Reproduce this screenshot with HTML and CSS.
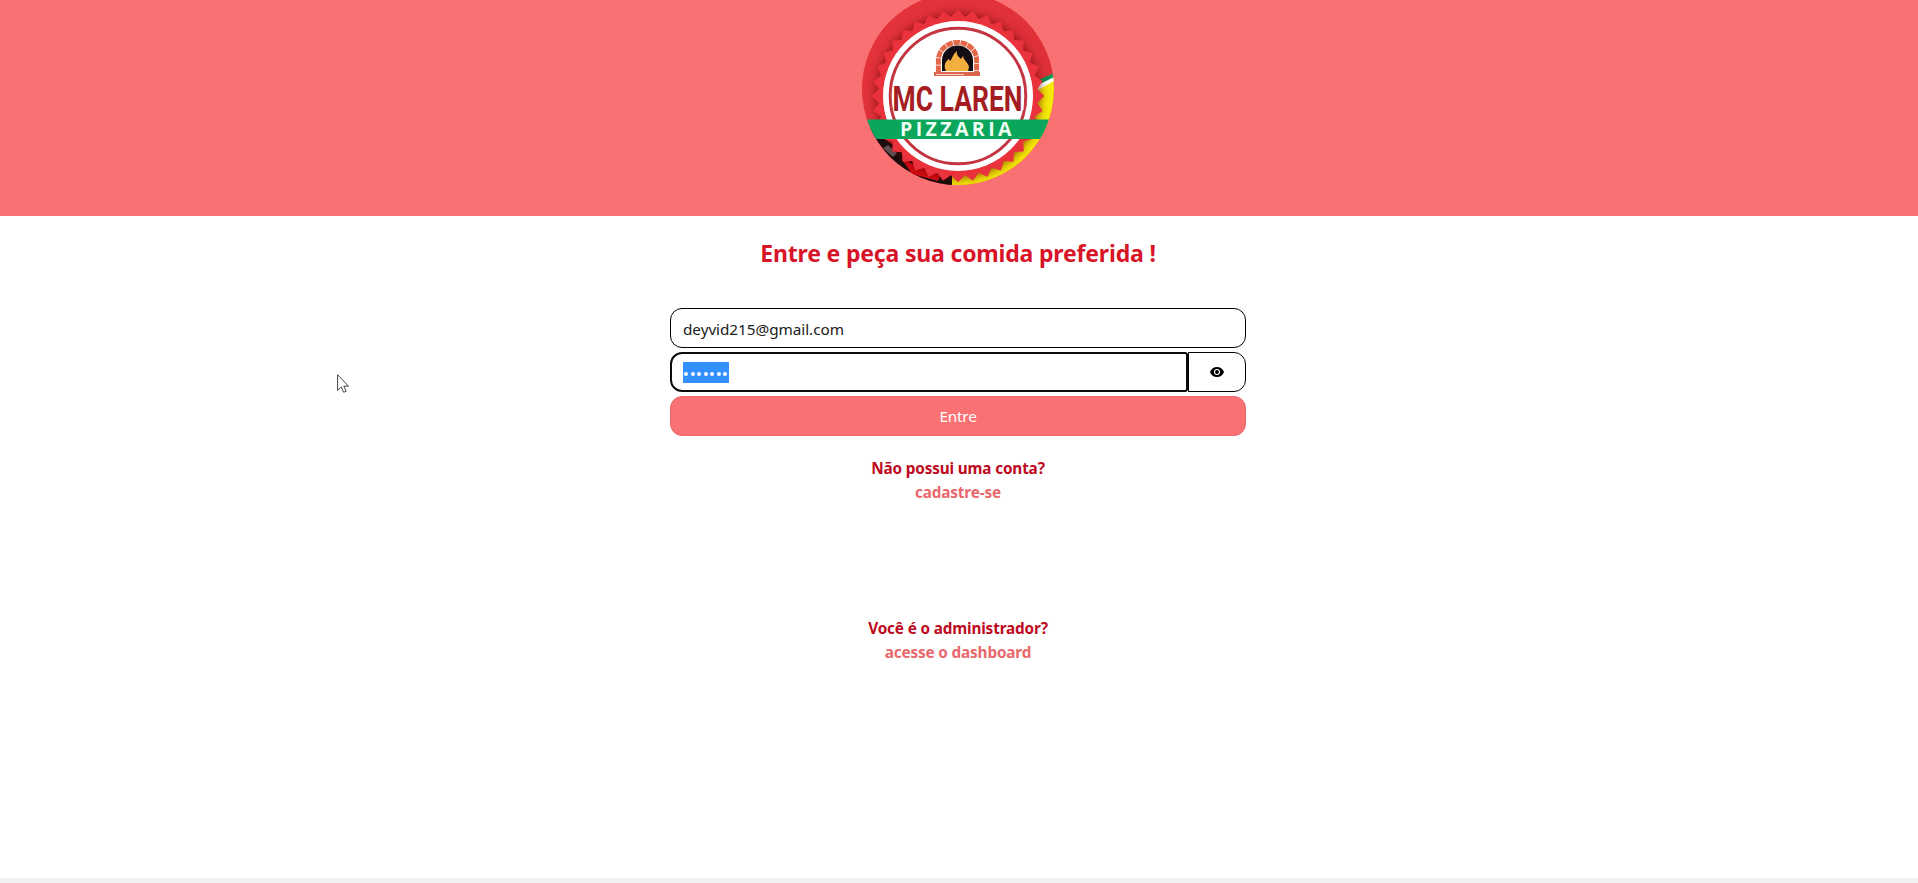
FILE: index.html
```html
<!DOCTYPE html>
<html lang="pt-BR">
<head>
<meta charset="utf-8">
<title>Mc Laren Pizzaria</title>
<link rel="stylesheet" href="styles.css">
</head>
<body>
<header class="hero">
  <svg class="logo" viewBox="862 -7 192 192" role="img" aria-label="Mc Laren Pizzaria">
    <defs>
      <clipPath id="disc"><circle cx="958" cy="89" r="96"/></clipPath>
      <linearGradient id="red" x1="0" y1="0" x2="0.8" y2="1"><stop offset="0" stop-color="#e5333b"/><stop offset="1" stop-color="#dc2f37"/></linearGradient>
      <filter id="soft" x="-20%" y="-20%" width="140%" height="140%"><feGaussianBlur stdDeviation="5"/></filter>
      <path id="sq" d="M958 11L1043 96L958 181L873 96Z"/>
      <g id="quarter"><use href="#sq"/><use href="#sq" transform="rotate(10 958 96)"/><use href="#sq" transform="rotate(20 958 96)"/><use href="#sq" transform="rotate(30 958 96)"/><use href="#sq" transform="rotate(40 958 96)"/></g>
      <g id="seal"><use href="#quarter"/><use href="#quarter" transform="rotate(50 958 96)"/></g>
    </defs>
    <g clip-path="url(#disc)">
      <rect x="862" y="-7" width="192" height="192" fill="url(#red)"/>
      <path d="M1036 83L1054 73V185H952V160Z" fill="#f5eb0a"/>
      <path d="M1038 84L1054 76V81L1038 90Z" fill="#fff"/>
      <path d="M1036 81L1054 73V77L1038 85Z" fill="#079455"/>
      <path d="M870 128L900 150L952 174V187H870Z" fill="#170d0e"/>
      <path d="M901 158L918 166L941 174L938 181L912 174Z" fill="#d80c14"/>
      <path d="M883 148L888 145L897 153L893 157Z" fill="#64565a"/>
      <use href="#seal" fill="#620911" opacity=".75" filter="url(#soft)"/>
      <use href="#seal" fill="#e9323b" stroke="#e9323b" stroke-width="1.5" stroke-linejoin="round"/>
      <circle cx="958" cy="96" r="75" fill="#fff"/>
      <circle cx="958" cy="96" r="67.8" fill="none" stroke="#c43441" stroke-width="3"/>
      <path d="M893 88H896V110H893ZM1020 88H1023.500V110H1020Z" fill="#fff"/>
      <path d="M938.4 72V60A19 17.5 0 0 1 976.6 60V72" fill="none" stroke="#e4694b" stroke-width="5" stroke-dasharray="6.6 .7"/>
      <path d="M942 71V60A15.5 14.5 0 0 1 973 60V71Z" fill="#130d13"/>
      <path d="M946 71C943 65 946 61 949 59L950 61C952 60 952 55 957 51C956 55 959 57 961 59L963 56C964 61 968 62 969 67L968 71Z" fill="#f2ae3e"/>
      <path d="M934 72H980V76H934Z" fill="#dc654d"/>
      <path d="M936 74.5H964" stroke="#fff" stroke-width=".7"/>
      <path d="M862 119.5H1054V139H862Z" fill="#0aa65c"/>
    </g>
    <text class="brand" transform="translate(892.5 110.5) scale(.768 1)">MC LAREN</text>
    <text class="kind" x="900" y="136" textLength="111.5" lengthAdjust="spacing">PIZZARIA</text>
  </svg>
</header>
<main class="content">
  <h1 class="title">Entre e peça sua comida preferida !</h1>
  <form class="form">
    <div class="field email"><span class="email-text">deyvid215@gmail.com</span></div>
    <div class="password-row">
      <div class="field password"><span class="selection"><i></i><i></i><i></i><i></i><i></i><i></i><i></i></span></div>
      <button class="reveal" type="button" aria-label="Mostrar senha">
        <svg class="eye" viewBox="0 0 14 10"><path fill="#000" d="M7 0C3.6 0 1 2 0 5C1 8 3.6 10 7 10S13 8 14 5C13 2 10.400 0 7 0Z"/><circle cx="7" cy="5" r="2.5" fill="none" stroke="#fff" stroke-width="1.1"/></svg>
      </button>
    </div>
    <button class="submit" type="button"><span class="submit-text">Entre</span></button>
  </form>
  <section class="prompt">
    <p class="question">Não possui uma conta?</p>
    <a class="link">cadastre-se</a>
  </section>
  <section class="prompt admin">
    <p class="question">Você é o administrador?</p>
    <a class="link">acesse o dashboard</a>
  </section>
</main>
<footer class="strip"></footer>
<svg class="cursor" viewBox="0 0 12 19"><path d="M.6.7V16.500L4.200 13L6.700 18.300L9.200 17.200L6.800 12.200H11.500Z" fill="#fff" stroke="#444" stroke-width="1"/></svg>
</body>
</html>
```
FILE: styles.css
```css
* { box-sizing: border-box; }
body {
  margin: 0;
  height: 883px;
  display: flex;
  flex-direction: column;
  overflow: hidden;
  background: #fff;
  font: 15.3px/24px "Noto Sans", "Open Sans", sans-serif;
}
.hero {
  height: 216px;
  flex: none;
  display: flex;
  justify-content: center;
  padding-right: 2px;
  background: #fa7173;
}
.logo { width: 192px; height: 192px; margin-top: -7px; overflow: visible; }
.brand { font: 700 34.5px Roboto, "Liberation Sans", sans-serif; fill: #a51d22; }
.kind { font: 700 19.5px "Open Sans", "Liberation Sans", sans-serif; fill: #eefff4; }
.content {
  flex: 1;
  display: flex;
  flex-direction: column;
  align-items: center;
  padding: 21px 2px 0 0;
}
.title {
  margin: 0;
  font-size: 23px;
  line-height: 32px;
  font-weight: 700;
  letter-spacing: -.18px;
  color: #d81427;
  white-space: nowrap;
}
.form { width: 576px; margin-top: 39px; display: flex; flex-direction: column; gap: 4px; }
.field {
  height: 40px;
  display: flex;
  align-items: center;
  padding-left: 12px;
  border: 1px solid #000;
  border-radius: 12px;
  background: #fff;
}
.email { color: #202020; padding-top: 2px; letter-spacing: -.05px; }
.password-row { display: flex; }
.password { flex: 1; border: 2px solid #0b0b0b; border-radius: 12px 3px 3px 12px; padding-left: 11px; }
.selection {
  display: flex;
  align-items: center;
  gap: 2.500px;
  width: 46px;
  height: 21px;
  padding: 3px 1px 0;
  background: #3390ff;
}
.selection i { width: 4px; height: 4px; border-radius: 50%; background: #fff; }
.reveal {
  width: 58px;
  height: 40px;
  padding: 0;
  display: grid;
  place-items: center;
  border: 1px solid #000;
  border-radius: 0 12px 12px 0;
  background: #fff;
}
.eye { width: 14px; height: 10px; }
.submit {
  height: 40px;
  border: 1px solid #e9696c;
  border-radius: 12px;
  background: #fa7173;
  color: #fff;
  font: inherit;
  letter-spacing: -.2px;
}
.prompt {
  display: flex;
  flex-direction: column;
  align-items: center;
  margin-top: 20px;
  font-weight: 700;
  letter-spacing: -.15px;
  white-space: nowrap;
}
.prompt.admin { margin-top: 112px; }
.question { margin: 0; color: #bd0a20; }
.link { color: #e8686b; }
.strip { height: 5px; flex: none; background: #f2f2f2; }
.cursor { position: absolute; left: 337px; top: 374px; width: 12px; height: 19px; }
```
